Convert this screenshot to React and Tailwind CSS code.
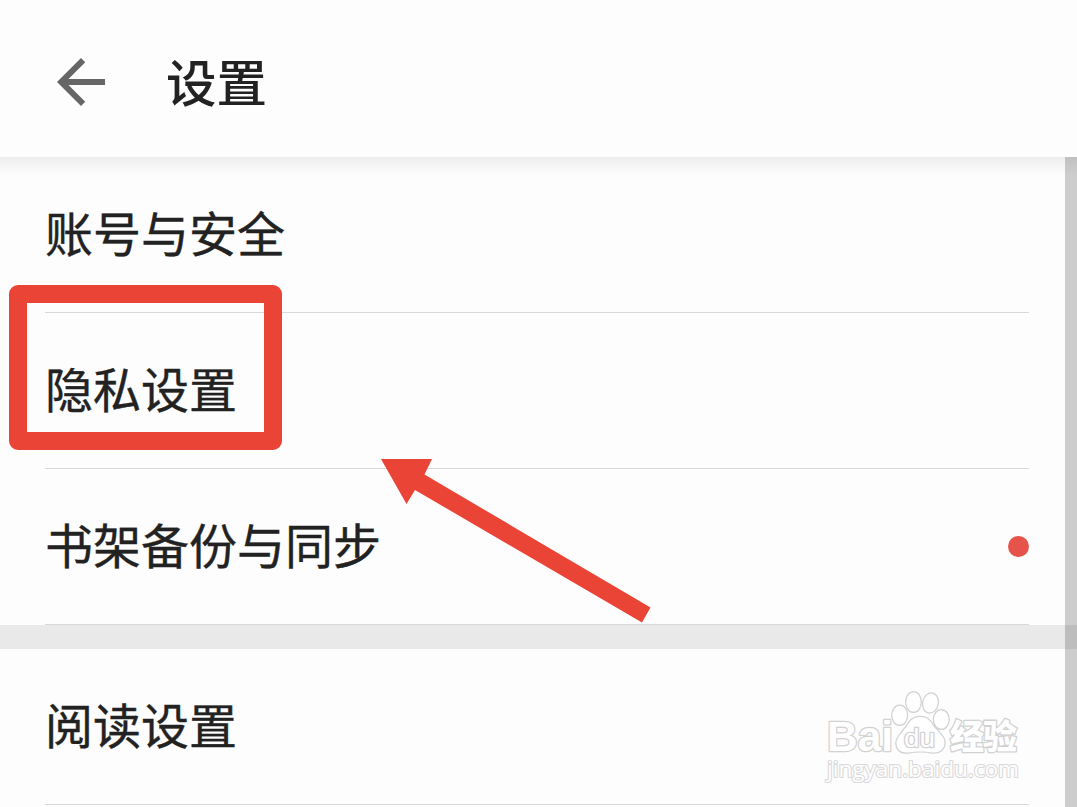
const sections = [
  [
    { title: "账号与安全" },
    { title: "隐私设置", highlighted: true },
    { title: "书架备份与同步", dot: true },
  ],
  [{ title: "阅读设置" }],
];

function BackIcon() {
  return (
    <svg width="48" height="48" viewBox="4 4 16 16" fill="#666">
      <path d="M20 11H7.83l5.59-5.59L12 4l-8 8 8 8 1.41-1.41L7.83 13H20v-2z" />
    </svg>
  );
}

function Arrow() {
  return (
    <svg className="absolute left-[381px] top-[459px] z-10" width="270" height="164" viewBox="0 0 270 164">
      <path d="M0 0 H51 L43.5 15.5 L269.5 148.5 L261 163.5 L34 31 L25.5 45 Z" fill="#ea4436" />
    </svg>
  );
}

function Watermark() {
  return (
    <svg
      className="absolute left-[820px] top-[685px]"
      width="206"
      height="102"
      viewBox="820 685 206 102"
      fill="#fff"
      stroke="#d2d2d2"
      strokeWidth="2.6"
      paintOrder="stroke"
      strokeLinejoin="round"
      fontFamily='"Liberation Sans", "Noto Sans CJK SC", sans-serif'
      fontWeight="700"
    >
      <text x="827" y="751" fontSize="43" textLength="66" lengthAdjust="spacingAndGlyphs">Bai</text>
      <g>
        <ellipse cx="899.7" cy="715.3" rx="7.3" ry="9.5" />
        <ellipse cx="913.5" cy="702" rx="7.2" ry="9.8" />
        <ellipse cx="930.5" cy="703" rx="7.2" ry="9.5" transform="rotate(12 930.5 703)" />
        <ellipse cx="941.3" cy="719.5" rx="7.3" ry="9.3" />
        <path d="M920 717 C928 717 931 722 934 727 C938 732 944 736 944.5 742 C944.5 749 940 753 933 752.5 C925 751 915 751 908 752.5 C900 753 896.5 749 896.5 743 C896.5 737 903 732 907 726 C910 721 913 717 920 717 Z" />
      </g>
      <text x="904" y="746.5" fontSize="26" fontWeight="400" textLength="31" lengthAdjust="spacingAndGlyphs">du</text>
      <text x="950" y="749" fontSize="34" fontWeight="900" textLength="67">经验</text>
      <text
        x="827"
        y="777"
        fontSize="22"
        fontWeight="500"
        strokeWidth="2.2"
        stroke="#d9d9d9"
        textLength="192"
        lengthAdjust="spacingAndGlyphs"
        fontFamily='"Open Sans", sans-serif'
      >
        jingyan.baidu.com
      </text>
    </svg>
  );
}

function Row({ title, highlighted, dot }) {
  return (
    <div className="relative mr-12 ml-[45px] flex h-[156px] items-center justify-between border-b border-[#d8d8d8]">
      <span className="pb-[7px] text-5xl leading-none [-webkit-text-stroke:0.4px_#222]">{title}</span>
      {dot && <span className="size-[21px] rounded-full bg-[#e5534b]" />}
      {highlighted && (
        <div className="absolute -top-[28px] -left-[36px] h-[165px] w-[273px] rounded-[9px] border-[18px] border-[#ea4436]" />
      )}
    </div>
  );
}

export default function App() {
  return (
    <main className="relative flex h-[807px] w-[1077px] flex-col overflow-hidden bg-[#fdfdfd] font-['Noto_Sans_CJK_SC',sans-serif] text-[#222]">
      <header className="flex h-[157px] shrink-0 items-center pb-[7px] pl-[57px]">
        <button className="mt-[14px]" aria-label="返回">
          <BackIcon />
        </button>
        <h1 className="mt-2.5 ml-[61px] text-[50.5px] leading-none font-medium">设置</h1>
      </header>

      <div className="relative flex-1 overflow-hidden">
        <div className="absolute inset-x-0 top-0 h-[18px] bg-linear-to-b from-[#ededed] to-[#fdfdfd]" />
        {sections.map((rows, i) => (
          <section key={i} className="border-b-24 border-[#e9e9e9] last-of-type:border-b-0">
            {rows.map((row) => (
              <Row key={row.title} {...row} />
            ))}
          </section>
        ))}
        {/* Scrollbar */}
        <div className="absolute inset-y-0 right-0 w-3 bg-black/19" />
      </div>

      <Arrow />
      <Watermark />
    </main>
  );
}
